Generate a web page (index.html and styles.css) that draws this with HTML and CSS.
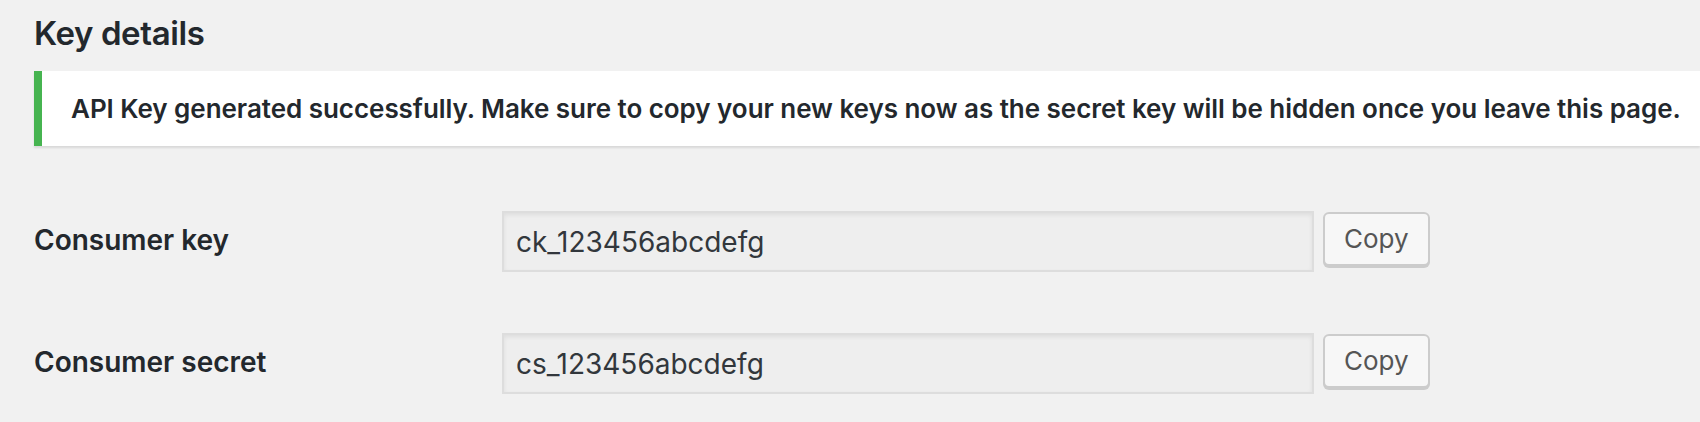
FILE: index.html
```html
<!DOCTYPE html>
<html lang="en">
<head>
<meta charset="utf-8">
<title>Key details</title>
<link rel="stylesheet" href="styles.css">
</head>
<body>
<div class="wrap">
  <h2 class="title">Key details</h2>
  <div class="notice notice-success">
    <p>API Key generated successfully. Make sure to copy your new keys now as the secret key will be hidden once you leave this page.</p>
  </div>
  <div class="form-table">
    <label class="field-label" for="key_consumer_key">Consumer key</label>
    <div class="field">
      <input class="key-input" id="key_consumer_key" type="text" value="ck_123456abcdefg" readonly>
      <button class="button" type="button">Copy</button>
    </div>
    <label class="field-label" for="key_consumer_secret">Consumer secret</label>
    <div class="field">
      <input class="key-input" id="key_consumer_secret" type="text" value="cs_123456abcdefg" readonly>
      <button class="button" type="button">Copy</button>
    </div>
  </div>
</div>
</body>
</html>
```
FILE: styles.css
```css
html, body {
  margin: 0;
  padding: 0;
}

body {
  background: #f1f1f1;
  color: #23282d;
  font-family: Inter, "Noto Sans", "Liberation Sans", sans-serif;
  overflow: hidden;
}

.wrap {
  padding-left: 34px;
}

.title {
  margin: 11px 0 0;
  font-size: 33px;
  line-height: 44px;
  font-weight: 600;
  letter-spacing: -0.4px;
  color: #23282d;
}

.notice {
  margin-top: 16px;
  background: #fff;
  border-left: 8px solid #46b450;
  box-shadow: 0 2px 2px rgba(0, 0, 0, 0.1);
  padding: 18px 0 18px 29px;
}

.notice p {
  margin: 0;
  font-size: 26px;
  line-height: 39px;
  font-weight: 600;
  letter-spacing: -0.04px;
  color: #23282d;
  white-space: nowrap;
}

.form-table {
  margin-top: 65px;
  display: grid;
  grid-template-columns: 468px auto;
  row-gap: 61px;
  align-items: center;
}

.field-label {
  font-size: 28px;
  font-weight: 600;
  color: #23282d;
  line-height: 40px;
  margin-top: -4px;
}

.field {
  display: flex;
  align-items: flex-start;
  gap: 9px;
}

.key-input {
  box-sizing: border-box;
  width: 812px;
  height: 61px;
  margin: 0;
  padding: 0 12px;
  background: #eee;
  border: 2px solid #ddd;
  border-radius: 0;
  box-shadow: inset 0 2px 4px rgba(0, 0, 0, 0.07);
  font-family: Inter, "Noto Sans", "Liberation Sans", sans-serif;
  font-size: 28px;
  color: #32373c;
  outline: none;
}

.button {
  box-sizing: border-box;
  margin-top: 1px;
  height: 54px;
  padding: 0 19px 2px;
  background: #f7f7f7;
  border: 2px solid #ccc;
  border-radius: 6px;
  box-shadow: 0 2px 0 #ccc;
  font-family: Inter, "Noto Sans", "Liberation Sans", sans-serif;
  font-size: 26px;
  color: #555;
  cursor: pointer;
}
```
